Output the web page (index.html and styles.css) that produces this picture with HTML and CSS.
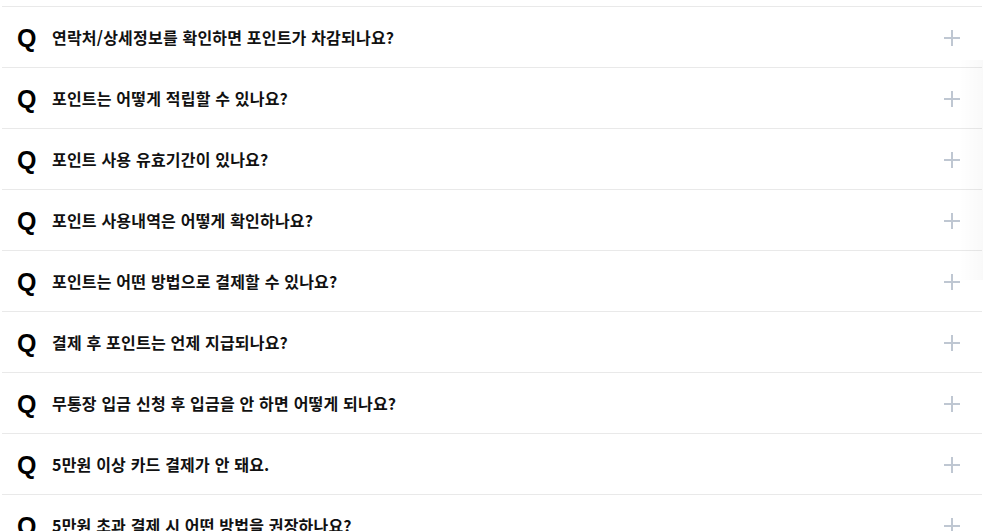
FILE: index.html
```html
<!DOCTYPE html>
<html lang="ko">
<head>
<meta charset="utf-8">
<link rel="stylesheet" href="styles.css">
</head>
<body>
<div class="faq">
  <div class="item"><span class="q">Q</span><span class="title">연락처/상세정보를 확인하면 포인트가 차감되나요?</span><span class="plus"></span></div>
  <div class="item"><span class="q">Q</span><span class="title">포인트는 어떻게 적립할 수 있나요?</span><span class="plus"></span></div>
  <div class="item"><span class="q">Q</span><span class="title">포인트 사용 유효기간이 있나요?</span><span class="plus"></span></div>
  <div class="item"><span class="q">Q</span><span class="title">포인트 사용내역은 어떻게 확인하나요?</span><span class="plus"></span></div>
  <div class="item"><span class="q">Q</span><span class="title">포인트는 어떤 방법으로 결제할 수 있나요?</span><span class="plus"></span></div>
  <div class="item"><span class="q">Q</span><span class="title">결제 후 포인트는 언제 지급되나요?</span><span class="plus"></span></div>
  <div class="item"><span class="q">Q</span><span class="title">무통장 입금 신청 후 입금을 안 하면 어떻게 되나요?</span><span class="plus"></span></div>
  <div class="item"><span class="q">Q</span><span class="title">5만원 이상 카드 결제가 안 돼요.</span><span class="plus"></span></div>
  <div class="item"><span class="q">Q</span><span class="title">5만원 초과 결제 시 어떤 방법을 권장하나요?</span><span class="plus"></span></div>
</div>
<div class="edge-shadow"></div>
</body>
</html>
```
FILE: styles.css
```css
html, body {
  margin: 0;
  padding: 0;
  background: #fff;
  overflow: hidden;
}
body {
  height: 531px;
  font-family: "Noto Sans CJK KR", "Noto Sans", sans-serif;
  color: #111;
}
.faq {
  margin: 6px 0 0 2px;
  width: 980px;
}
.item {
  display: flex;
  align-items: center;
  height: 60px;
  border-top: 1px solid #e9e9e9;
  padding: 0 22px 0 15px;
}
.q {
  width: 35px;
  flex: none;
  font-family: "Liberation Sans", Arial, sans-serif;
  font-weight: 700;
  font-size: 25px;
  line-height: 1;
  color: #000;
  position: relative;
  top: 1px;
}
.title {
  flex: 1;
  font-size: 16px;
  font-weight: 700;
  letter-spacing: 0.2px;
  line-height: 1;
  color: #111;
}
.plus {
  width: 16px;
  height: 16px;
  flex: none;
  position: relative;
  top: 1px;
}
.plus::before, .plus::after {
  content: "";
  position: absolute;
  background: #bfc7d2;
}
.plus::before {
  left: 0;
  top: 7px;
  width: 16px;
  height: 2px;
}
.plus::after {
  left: 7px;
  top: 0;
  width: 2px;
  height: 16px;
}
.edge-shadow {
  position: absolute;
  right: 0;
  top: 60px;
  width: 24px;
  height: 220px;
  background: linear-gradient(to right, rgba(0,0,0,0), rgba(0,0,0,0.025));
  pointer-events: none;
}
```
